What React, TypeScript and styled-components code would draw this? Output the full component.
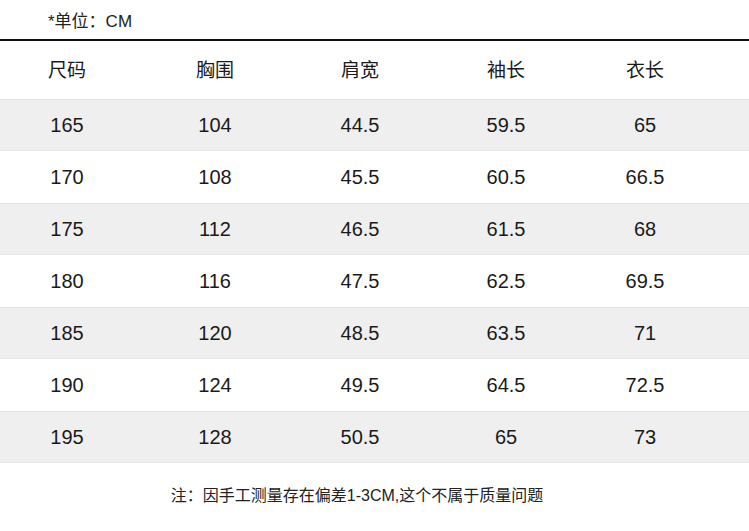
import React from 'react';
import styled, { createGlobalStyle } from 'styled-components';

const GlobalStyle = createGlobalStyle`
  body {
    margin: 0;
    background: #ffffff;
    font-family: "Liberation Sans", "Noto Sans CJK SC", sans-serif;
    color: #1a1a1a;
  }
`;

const Page = styled.div`
  width: 749px;
  height: 531px;
  overflow: hidden;
  background: #fff;
`;

const Unit = styled.div`
  height: 41px;
  padding-left: 48px;
  padding-bottom: 1px;
  display: flex;
  align-items: center;
  font-size: 17px;
  color: #222;
  border-bottom: 2px solid #111;
  box-sizing: border-box;
`;

const Table = styled.div`
  display: flex;
  flex-direction: column;
`;

const Row = styled.div<{ $shade?: boolean; $head?: boolean }>`
  display: grid;
  grid-template-columns: 134px 162px 128px 164px 114px 1fr;
  align-items: center;
  height: ${(p) => (p.$head ? '58px' : '52px')};
  padding-bottom: ${(p) => (p.$head ? '3px' : '0')};
  box-sizing: border-box;
  background: ${(p) => (p.$shade ? '#efefef' : '#fff')};
  border-top: 1px solid ${(p) => (p.$shade ? '#e4e4e4' : 'transparent')};
  border-bottom: 1px solid ${(p) => (p.$shade ? '#e4e4e4' : 'transparent')};
`;

const Cell = styled.div<{ $head?: boolean }>`
  text-align: center;
  font-size: ${(p) => (p.$head ? '19px' : '20px')};
  color: #1a1a1a;
`;

const Note = styled.div`
  margin-top: 19px;
  padding-right: 35px;
  text-align: center;
  font-size: 16px;
  color: #222;
`;

const head = ['尺码', '胸围', '肩宽', '袖长', '衣长'];
const rows = [
  ['165', '104', '44.5', '59.5', '65'],
  ['170', '108', '45.5', '60.5', '66.5'],
  ['175', '112', '46.5', '61.5', '68'],
  ['180', '116', '47.5', '62.5', '69.5'],
  ['185', '120', '48.5', '63.5', '71'],
  ['190', '124', '49.5', '64.5', '72.5'],
  ['195', '128', '50.5', '65', '73'],
];

export default function App() {
  return (
    <Page>
      <GlobalStyle />
      <Unit>*单位：CM</Unit>
      <Table>
        <Row $head>
          {head.map((h) => (
            <Cell key={h} $head>
              {h}
            </Cell>
          ))}
        </Row>
        {rows.map((r, i) => (
          <Row key={r[0]} $shade={i % 2 === 0}>
            {r.map((v, j) => (
              <Cell key={j}>{v}</Cell>
            ))}
          </Row>
        ))}
      </Table>
      <Note>注：因手工测量存在偏差1-3CM,这个不属于质量问题</Note>
    </Page>
  );
}
